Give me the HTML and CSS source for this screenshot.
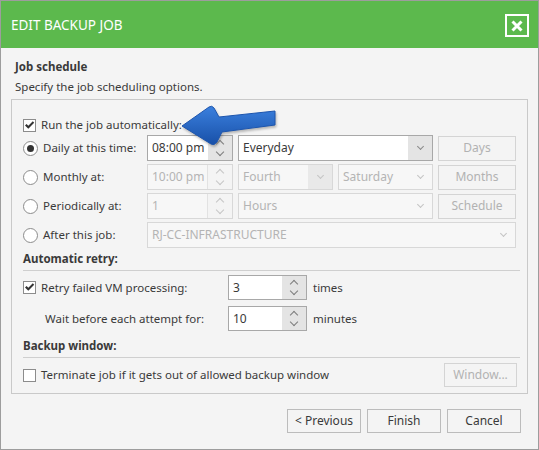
FILE: index.html
```html
<!DOCTYPE html>
<html lang="en">
<head>
  <meta charset="UTF-8" />
  <meta name="viewport" content="width=device-width, initial-scale=1.0"/>
  <title>Edit Backup Job</title>
  <link rel="stylesheet" href="styles.css">
</head>
<body>
  <div class="dialog">
    <div class="titlebar">
      <span class="title">EDIT BACKUP JOB</span>
      <button class="close" type="button" aria-label="Close">
        <svg width="12" height="12" viewBox="0 0 12 12"><path d="M1.5 1.5 L10.5 10.5 M10.5 1.5 L1.5 10.5" stroke="#fff" stroke-width="3"/></svg>
      </button>
    </div>

    <div class="content">
      <div class="step-title">Job schedule</div>
      <div class="step-desc">Specify the job scheduling options.</div>

      <div class="panel">
        <!-- callout pointing at the auto-run checkbox -->
        <svg class="callout" width="100" height="48" viewBox="0 0 100 48">
          <defs>
            <linearGradient id="arrowFill" x1="0" y1="0" x2="0" y2="1">
              <stop offset="0" stop-color="#3b80de"/>
              <stop offset="1" stop-color="#1850a8"/>
            </linearGradient>
          </defs>
          <path d="M4 23 L31 4 Q34 2 36 5 L41 14 L97 8 L97 22 L44 29 L39 39 Q36 43 33 41 Z" fill="url(#arrowFill)" stroke="#1d55ad" stroke-width="1" stroke-linejoin="round"/>
        </svg>

        <label class="check-row">
          <span class="checkbox checked"><svg width="11" height="11" viewBox="0 0 11 11"><path d="M1 5.5 L2.6 4 L4.3 5.8 L8.8 1.3 L10.2 2.8 L4.3 8.8 Z" fill="#333"/></svg></span>
          Run the job automatically:
        </label>

        <div class="schedule">
          <label class="opt"><span class="radio on"></span>Daily at this time:</label>
          <div class="field spin">
            <span class="val">08:00 pm</span>
            <span class="spin-btns"><span class="up"></span><span class="dn"></span></span>
          </div>
          <div class="field select span2">
            <span class="val">Everyday</span>
            <span class="drop filled"></span>
          </div>
          <button class="btn" disabled>Days</button>

          <label class="opt"><span class="radio"></span>Monthly at:</label>
          <div class="field spin off">
            <span class="val">10:00 pm</span>
            <span class="spin-btns"><span class="up"></span><span class="dn"></span></span>
          </div>
          <div class="field select off">
            <span class="val">Fourth</span>
            <span class="drop filled"></span>
          </div>
          <div class="field select off">
            <span class="val">Saturday</span>
            <span class="drop"></span>
          </div>
          <button class="btn" disabled>Months</button>

          <label class="opt"><span class="radio"></span>Periodically at:</label>
          <div class="field spin off">
            <span class="val">1</span>
            <span class="spin-btns"><span class="up"></span><span class="dn"></span></span>
          </div>
          <div class="field select off span2">
            <span class="val">Hours</span>
            <span class="drop"></span>
          </div>
          <button class="btn" disabled>Schedule</button>

          <label class="opt"><span class="radio"></span>After this job:</label>
          <div class="field select off span4">
            <span class="val">RJ-CC-INFRASTRUCTURE</span>
            <span class="drop"></span>
          </div>
        </div>

        <div class="group-title">Automatic retry:</div>
        <div class="retry">
          <label class="opt">
            <span class="checkbox checked"><svg width="11" height="11" viewBox="0 0 11 11"><path d="M1 5.5 L2.6 4 L4.3 5.8 L8.8 1.3 L10.2 2.8 L4.3 8.8 Z" fill="#333"/></svg></span>
            Retry failed VM processing:
          </label>
          <div class="field spin">
            <span class="val">3</span>
            <span class="spin-btns"><span class="up"></span><span class="dn"></span></span>
          </div>
          <span class="unit">times</span>

          <span class="opt indent">Wait before each attempt for:</span>
          <div class="field spin">
            <span class="val">10</span>
            <span class="spin-btns"><span class="up"></span><span class="dn"></span></span>
          </div>
          <span class="unit">minutes</span>
        </div>

        <div class="group-title second">Backup window:</div>
        <div class="window-row">
          <label class="opt"><span class="checkbox"></span>Terminate job if it gets out of allowed backup window</label>
          <button class="btn wide" disabled>Window...</button>
        </div>
      </div>

      <div class="footer">
        <button class="btn">&lt; Previous</button>
        <button class="btn">Finish</button>
        <button class="btn">Cancel</button>
      </div>
    </div>
  </div>
</body>
</html>
```

FILE: styles.css
```css
body {
  margin: 0;
  font-family: "Noto Sans", "Open Sans", sans-serif;
  font-size: 11.5px;
  line-height: 16px;
  color: #3a3a3a;
}
.dialog {
  width: 539px;
  height: 450px;
  box-sizing: border-box;
  border: 1px solid #9d9d9d;
  background: #f4f4f4;
}
.titlebar {
  height: 47px;
  background: #5cb94d;
  display: flex;
  align-items: center;
  justify-content: space-between;
  padding: 0 9px 0 10px;
}
.title {
  color: #fff;
  font-size: 13.5px;
}
.close {
  width: 24px;
  height: 23px;
  box-sizing: border-box;
  border: 2px solid #fff;
  background: none;
  padding: 0;
  margin-top: 2px;
  display: flex;
  align-items: center;
  justify-content: center;
}
.content {
  padding: 0 10px;
}
.step-title {
  font-weight: bold;
  padding: 11px 0 0 4px;
}
.step-desc {
  margin-top: 4px;
  padding-left: 4px;
}
.panel {
  position: relative;
  margin-top: 4px;
  border: 1px solid #c9c9c9;
  padding: 17px 7px 6px 11px;
}
.callout {
  position: absolute;
  left: 166px;
  top: 3px;
  filter: drop-shadow(1px 2px 1px rgba(0,0,0,0.25));
}

/* check boxes and radios */
.check-row, .opt {
  display: flex;
  align-items: center;
  white-space: nowrap;
}
.check-row {
  height: 16px;
}
.checkbox {
  width: 13px;
  height: 13px;
  box-sizing: border-box;
  border: 1px solid #8c8c8c;
  background: #fff;
  margin-right: 5px;
  display: flex;
  align-items: center;
  justify-content: center;
  flex-shrink: 0;
}
.radio {
  width: 15px;
  height: 15px;
  box-sizing: border-box;
  border: 1px solid #8c8c8c;
  border-radius: 50%;
  background: #fff;
  margin-right: 5px;
  display: flex;
  align-items: center;
  justify-content: center;
  flex-shrink: 0;
}
.radio.on::after {
  content: "";
  width: 7px;
  height: 7px;
  border-radius: 50%;
  background: #333;
}

/* schedule grid */
.schedule {
  margin-top: 2px;
  display: grid;
  grid-template-columns: 119px 86px 95px 95px 78px;
  grid-auto-rows: 26px;
  column-gap: 5px;
  row-gap: 3px;
  align-items: center;
}
.span2 { grid-column: span 2; }
.span4 { grid-column: span 4; }

/* inputs, spinners, drop-downs */
.field {
  height: 26px;
  box-sizing: border-box;
  border: 1px solid #a8a8a8;
  background: #fff;
  display: flex;
  align-items: stretch;
  color: #3a3a3a;
}
.field .val {
  flex: 1;
  padding-left: 4px;
  display: flex;
  align-items: center;
  overflow: hidden;
  white-space: nowrap;
  font-size: 12px;
}
.spin-btns {
  width: 24px;
  background: #e4e4e4;
  display: flex;
  flex-direction: column;
}
.up, .dn {
  flex: 1;
  display: flex;
  align-items: center;
  justify-content: center;
  color: #7d7d7d;
}
.up::before, .dn::before {
  content: "";
  width: 5px;
  height: 5px;
  border-left: 1.5px solid currentColor;
  border-top: 1.5px solid currentColor;
}
.up::before {
  transform: rotate(45deg);
  margin-top: 4px;
}
.dn::before {
  transform: rotate(225deg);
  margin-bottom: 4px;
}
.drop {
  width: 24px;
  display: flex;
  align-items: center;
  justify-content: center;
  color: #8a8a8a;
}
.drop.filled {
  background: #e4e4e4;
}
.drop::before {
  content: "";
  width: 4px;
  height: 4px;
  border-right: 1.5px solid currentColor;
  border-bottom: 1.5px solid currentColor;
  transform: rotate(45deg);
  margin-top: -3px;
}
.field.off {
  border-color: #d8d8d8;
  background: #f7f7f7;
  color: #b4b4b4;
}
.field.off .spin-btns {
  background: #f4f4f4;
  border-left: 1px solid #e2e2e2;
}
.field.off .up, .field.off .dn {
  color: #c6c6c6;
}
.field.off .drop {
  color: #c4c4c4;
}
.field.off .drop.filled {
  background: #e9e9e9;
}

/* buttons */
.btn {
  height: 24px;
  box-sizing: border-box;
  border: 1px solid #bcbcbc;
  background: #f4f4f4;
  font: inherit;
  font-size: 12px;
  color: #3a3a3a;
  padding: 0;
}
.btn:disabled {
  border-color: #d4d4d4;
  color: #b2b2b2;
}
.schedule .btn {
  height: 25px;
}

/* section headings inside the panel */
.group-title {
  margin-top: 3px;
  padding-bottom: 3px;
  border-bottom: 1px solid #cfcfcf;
  font-weight: bold;
}
.group-title.second {
  margin-top: 7px;
}

.retry {
  margin-top: 4px;
  display: grid;
  grid-template-columns: 199px 79px auto;
  grid-auto-rows: 25px;
  column-gap: 6px;
  row-gap: 6px;
  align-items: center;
}
.retry .field {
  height: 25px;
}
.indent {
  padding-left: 22px;
}

.window-row {
  margin-top: 5px;
  display: flex;
  align-items: center;
  justify-content: space-between;
}
.btn.wide {
  width: 73px;
  margin-right: 3px;
}

.footer {
  margin-top: 15px;
  padding-right: 7px;
  display: flex;
  justify-content: flex-end;
  gap: 6px;
}
.footer .btn {
  width: 74px;
}
```
